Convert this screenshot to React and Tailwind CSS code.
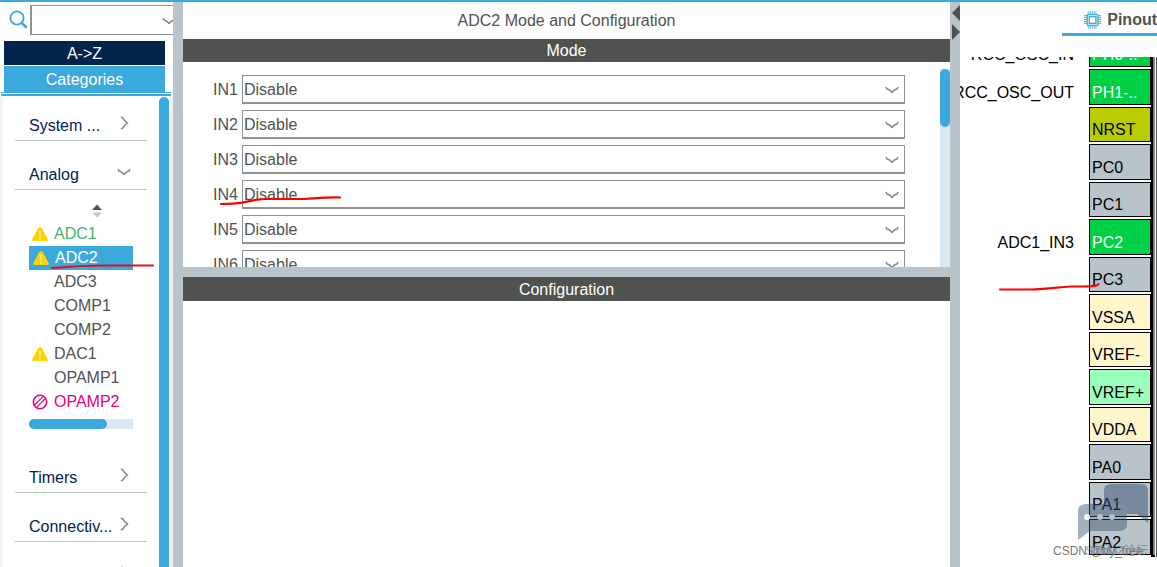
import React from "react";

const PERIPHERALS = [
  { name: "ADC1", status: "warn", tone: "text-[#3fb568]" },
  { name: "ADC2", status: "warn", tone: "text-white", selected: true },
  { name: "ADC3", tone: "text-[#505250]" },
  { name: "COMP1", tone: "text-[#505250]" },
  { name: "COMP2", tone: "text-[#505250]" },
  { name: "DAC1", status: "warn", tone: "text-[#505250]" },
  { name: "OPAMP1", tone: "text-[#505250]" },
  { name: "OPAMP2", status: "blocked", tone: "text-[#e6007e]" },
];

const CHANNELS = ["IN1", "IN2", "IN3", "IN4", "IN5", "IN6"];

const PINS = [
  { name: "PH0-..", signal: "RCC_OSC_IN", tone: "bg-[#00d046] text-white" },
  { name: "PH1-..", signal: "RCC_OSC_OUT", tone: "bg-[#00d046] text-white" },
  { name: "NRST", tone: "bg-[#bbcc00] text-black" },
  { name: "PC0", tone: "bg-[#b9c4ca] text-black" },
  { name: "PC1", tone: "bg-[#b9c4ca] text-black" },
  { name: "PC2", signal: "ADC1_IN3", tone: "bg-[#00d046] text-white" },
  { name: "PC3", tone: "bg-[#b9c4ca] text-black" },
  { name: "VSSA", tone: "bg-[#fff6cc] text-black" },
  { name: "VREF-", tone: "bg-[#fff6cc] text-black" },
  { name: "VREF+", tone: "bg-[#99ffbb] text-black" },
  { name: "VDDA", tone: "bg-[#fff6cc] text-black" },
  { name: "PA0", tone: "bg-[#b9c4ca] text-black" },
  { name: "PA1", tone: "bg-[#b9c4ca] text-black" },
  { name: "PA2", tone: "bg-[#b9c4ca] text-black" },
];

function Chevron({ right = false, className = "" }) {
  return (
    <svg
      viewBox="0 0 14 14"
      className={"h-[14px] w-[14px] shrink-0 " + className}
      fill="none"
      stroke="#858585"
      strokeWidth="1.5"
      aria-hidden="true"
    >
      <path d={right ? "M4 1 L6 2 L7.5 4.5 L10.5 7 L7.5 9.5 L6 12 L4 13" : "M1 4 L2 6 L4.5 7 L7 9.5 L9.5 7 L12 6 L13 4"} />
    </svg>
  );
}

function StatusIcon({ status }) {
  if (status === "warn") {
    return (
      <svg viewBox="0 0 16 14" className="h-[14px] w-4" aria-hidden="true">
        <path d="M8 0.2 Q9.6 0.2 10.4 2 L15.6 12 Q16.3 14 14.5 14 H1.5 Q-0.3 14 0.4 12 L5.6 2 Q6.4 0.2 8 0.2Z" fill="#ffd200" />
        <path d="M8 4V9.5M8 10.8V12.8" stroke="#fff" strokeOpacity="0.7" strokeWidth="1.6" />
      </svg>
    );
  }
  if (status === "blocked") {
    return (
      <svg viewBox="0 0 16 16" className="h-4 w-4" fill="none" stroke="#e6007e" strokeWidth="1.6" aria-hidden="true">
        <circle cx="8" cy="8" r="6.7" />
        <path d="M2.6 11 L10.8 2.8 M4.8 13.2 L13 5" strokeWidth="1.1" />
      </svg>
    );
  }
  return null;
}

function Category({ title, open = false }) {
  return (
    <button
      type="button"
      aria-expanded={open}
      className="flex h-[31px] w-full shrink-0 items-start border-b border-[#b9c4ca] pl-[14px] text-left text-[#03234b]"
    >
      <span className="w-[88px] leading-8">{title}</span>
      <Chevron right={!open} className="mt-[6px]" />
    </button>
  );
}

function Sidebar() {
  return (
    <aside className="flex w-[173px] shrink-0 flex-col overflow-hidden">
      <div className="flex h-[39px] shrink-0 items-start pt-[3px] pl-2">
        <svg viewBox="0 0 20 20" className="mt-[5px] mr-[2px] h-5 w-5 shrink-0" fill="none" stroke="#3ca9dc" aria-hidden="true">
          <circle cx="9" cy="8" r="6.6" strokeWidth="1.9" />
          <path d="M13.5 12.8 L18.7 17.8" strokeWidth="2.6" />
        </svg>
        <div className="relative h-[30px] flex-1 border-y border-l-2 border-[#8c9297]">
          <input aria-label="Search" className="h-full w-full bg-white px-2 outline-none" />
          <Chevron className="absolute top-2 -right-[3px]" />
        </div>
      </div>
      <div className="mr-2 ml-1 flex shrink-0 flex-col">
        <button type="button" className="h-6 bg-[#03234b] pt-px leading-6 text-white">A-&gt;Z</button>
        <button type="button" className="mt-px h-[26px] bg-[#3ca9dc] pt-px text-white">Categories</button>
      </div>
      <div className="mr-[2px] ml-px h-1 shrink-0 border-t border-b-2 border-[#3ca9dc]" />
      <div className="flex min-h-0 flex-1 border-l-[3px] border-[#f0f2f5]">
        <div className="flex flex-1 flex-col overflow-hidden pr-3 pl-3">
          <div className="mt-[14px] flex flex-col gap-[18px]">
            <Category title="System ..." />
            <Category title="Analog" open />
          </div>
          <div className="flex h-8 shrink-0 items-end justify-center pb-1 pl-8">
            <svg viewBox="0 0 10 14" className="h-[14px] w-[10px]" aria-hidden="true">
              <path d="M5 0.5 L10 6 H0Z" fill="#505250" />
              <path d="M0 8.5 H10 L5 13.5Z" fill="#c8c8c8" />
            </svg>
          </div>
          <ul className="mx-[14px] flex shrink-0 flex-col">
            {PERIPHERALS.map((p) => (
              <li key={p.name}>
                <button
                  type="button"
                  className={
                    "flex h-6 w-full items-center text-left leading-6 " +
                    p.tone +
                    (p.selected ? " bg-[#3ca9dc] pl-1" : " pl-[3px]")
                  }
                >
                  <span className="mr-[6px] w-4">
                    <StatusIcon status={p.status} />
                  </span>
                  {p.name}
                </button>
              </li>
            ))}
          </ul>
          <div className="mx-[14px] mt-[5px] h-[10px] shrink-0 rounded-l-full bg-[#dbe9f5]">
            <div className="h-full w-3/4 rounded-full bg-[#3ca9dc]" />
          </div>
          <div className="mt-[33px] flex flex-col gap-[18px]">
            <Category title="Timers" />
            <Category title="Connectiv..." />
            <Category title="" />
          </div>
        </div>
        <div className="mt-px w-[10px] shrink-0 rounded-t-full bg-[#3ca9dc]" />
        <div className="w-1 shrink-0 bg-[#f0f2f5]" />
      </div>
    </aside>
  );
}

function ModePanel() {
  return (
    <main className="flex min-w-0 flex-1 flex-col text-[#505250]">
      <h1 className="h-[37px] shrink-0 text-center leading-[37px]">ADC2 Mode and Configuration</h1>
      <h2 className="h-[23px] shrink-0 bg-[#505250] text-center leading-[23px] text-white">Mode</h2>
      <section className="flex h-[205px] shrink-0 overflow-hidden">
        <div className="flex flex-1 flex-col gap-[6px] pt-[13px] pr-[35px] pl-[30px]">
          {CHANNELS.map((c) => (
            <div key={c} className="flex h-[29px] shrink-0 items-center">
              <label htmlFor={c} className="w-[29px]">{c}</label>
              <div className="relative h-full flex-1">
                <select
                  id={c}
                  className="block h-full w-full appearance-none border border-b-2 border-[#8c9297] bg-white pt-px pl-px outline-none"
                >
                  <option>Disable</option>
                </select>
                <Chevron className="pointer-events-none absolute top-2 right-[6px]" />
              </div>
            </div>
          ))}
        </div>
        <div className="mt-[7px] w-[10px] bg-[#dbe9f5]">
          <div className="h-[58px] rounded-full bg-[#3ca9dc]" />
        </div>
      </section>
      <div className="h-[10px] shrink-0 bg-[#b9c4ca]" />
      <h2 className="h-6 shrink-0 bg-[#505250] pt-px text-center leading-6 text-white">Configuration</h2>
    </main>
  );
}

function ChipIcon() {
  return (
    <svg viewBox="0 0 18 18" className="h-[18px] w-[18px]" fill="none" stroke="#3ca9dc" aria-hidden="true">
      <path d="M4.5 0V18M6.5 0V18M8.5 0V18M10.5 0V18M12.5 0V18M0 4.5H18M0 6.5H18M0 8.5H18M0 10.5H18M0 12.5H18" />
      <rect x="3.5" y="3.5" width="11" height="11" fill="#fff" strokeWidth="1.2" />
      <rect x="5.5" y="5.500" width="7" height="7" strokeWidth="1.4" />
    </svg>
  );
}

function PinoutPanel() {
  return (
    <section className="flex w-[197px] shrink-0 flex-col overflow-hidden">
      <div className="flex h-[55px] shrink-0 items-start justify-end">
        <button
          type="button"
          className="flex h-[34px] w-[95px] items-center gap-[6px] border-b-[3px] border-[#3ca9dc] pt-[5px] pl-[22px] font-bold text-[#505250]"
        >
          <ChipIcon />
          Pinout
        </button>
      </div>
      <div className="flex min-h-0 flex-1 items-start overflow-hidden">
        <div className="-mt-[25px] flex min-w-0 flex-1 flex-col gap-[2px]">
          {PINS.map((pin) => (
            <div key={pin.name} className="flex shrink-0 items-end justify-end odd:h-[35px] even:h-[36px]">
              <span className="mr-[15px] leading-[25px] whitespace-nowrap">{pin.signal}</span>
              <div className={"flex h-full w-[62px] shrink-0 items-end border border-black pl-[2px] leading-[22px] " + pin.tone}>
                {pin.name}
              </div>
            </div>
          ))}
        </div>
        <div className="h-[500px] w-1 shrink-0 border-b-2 border-l-2 border-black bg-[#808588]" />
        <div className="ml-px h-[500px] w-px shrink-0 bg-[#505250]" />
      </div>
    </section>
  );
}

export default function App() {
  return (
    <div
      className="relative flex h-screen overflow-hidden border-t-2 border-[#3ca9dc] bg-white text-base"
      style={{ fontFamily: '"Liberation Sans", Arial, "Noto Sans CJK SC", sans-serif' }}
    >
      <Sidebar />
      <div className="w-[10px] shrink-0 bg-[#b9c4ca]" />
      <ModePanel />
      <div className="flex w-[10px] shrink-0 flex-col items-end bg-[#b9c4ca]">
        <svg viewBox="0 0 8 40" className="h-10 w-2" fill="#505250" aria-hidden="true">
          <path d="M8 3V19L0 11Z M0 22L8 30L0 38Z" />
        </svg>
      </div>
      <PinoutPanel />

      <svg className="pointer-events-none absolute top-[184px] left-[215px] h-6 w-32" viewBox="0 0 128 24" fill="none" stroke="#f00" strokeWidth="2.2" strokeLinecap="round" aria-hidden="true">
        <path d="M6 18 C34 18 30 14 50 13 H90 C105 12 114 11 125 11.5" />
      </svg>
      <svg className="pointer-events-none absolute top-[256px] left-[45px] h-4 w-28" viewBox="0 0 112 16" fill="none" stroke="#e01020" strokeWidth="2.2" strokeLinecap="round" aria-hidden="true">
        <path d="M7 10 C30 8 45 7.500 62 7.500 H108" />
      </svg>
      <svg className="pointer-events-none absolute top-[277px] right-[50px] h-4 w-28" viewBox="0 0 112 16" fill="none" stroke="#f00" strokeWidth="2.2" strokeLinecap="round" aria-hidden="true">
        <path d="M5 10.5 H35 C52 10 65 8 75 7.5 H90 C98 7 103 7 103.5 5" />
      </svg>

      <div className="pointer-events-none absolute right-0 bottom-0 h-[87px] w-[112px]">
        <svg viewBox="0 0 112 87" className="h-full w-full" fill="#35506f" aria-hidden="true">
          <path fillOpacity="0.5" d="M66 4 H96 Q103 4 103 11 V43 L92 34 H82 V31 Q82 24 75 24 H59 V11 Q59 4 66 4Z" />
          <path fillOpacity="0.45" d="M41 24 H75 Q82 24 82 31 V44 Q82 51 75 51 H45 L33 60 V31 Q33 24 41 24Z" />
          <circle cx="42" cy="37" r="3" fill="#fff" />
          <circle cx="55" cy="37" r="3" fill="#b9c4ca" />
          <circle cx="67" cy="37" r="3" fill="#b9c4ca" />
        </svg>
        <span className="absolute right-[9px] bottom-2 text-[12px] leading-4 whitespace-nowrap text-[#35506f]/50">STM32论坛</span>
        <span className="absolute bottom-2 left-2 text-[12px] leading-4 whitespace-nowrap text-[#777]">CSDN @hy_free</span>
      </div>
    </div>
  );
}
